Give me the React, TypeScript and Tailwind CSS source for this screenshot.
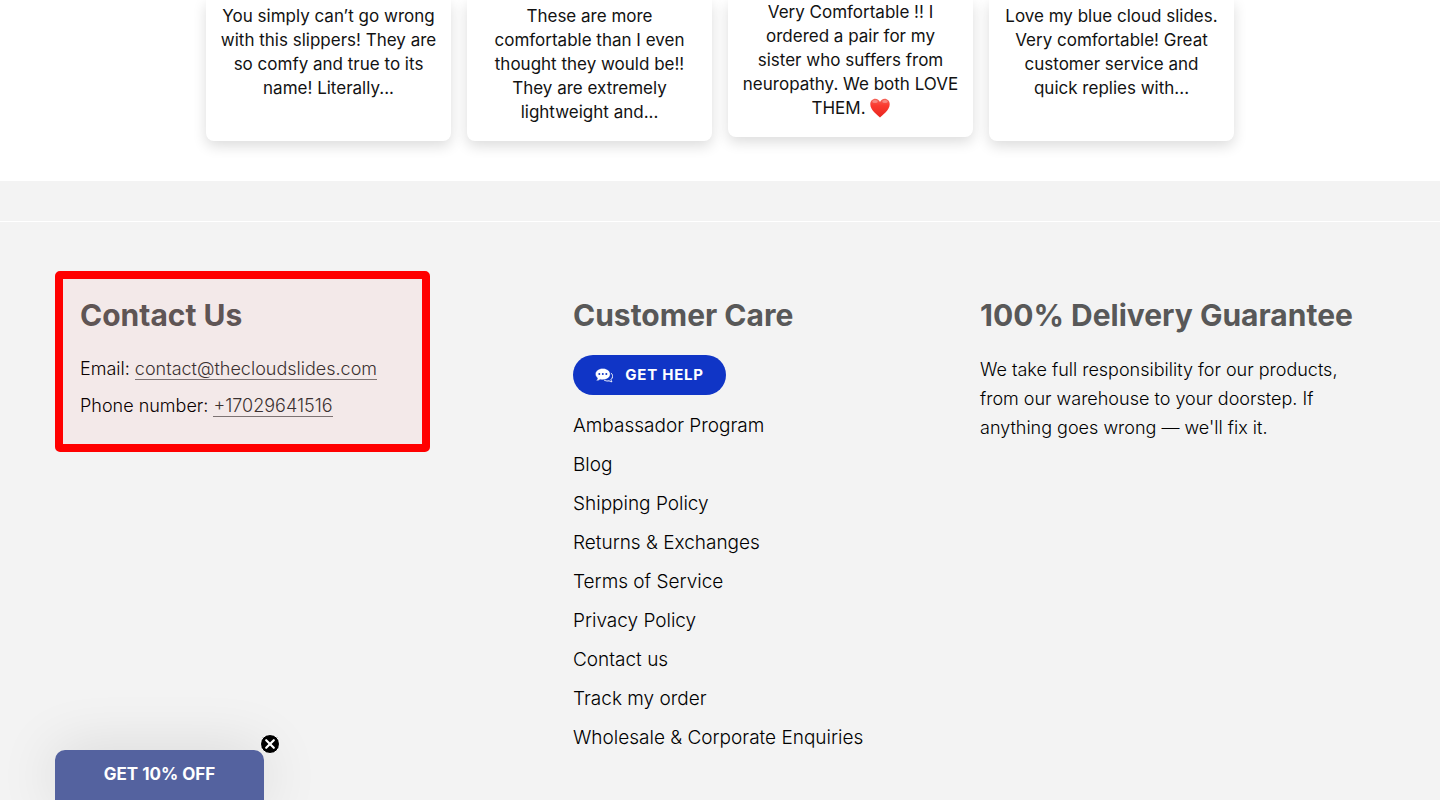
import { useState } from "react";

interface Review {
  lines: string[];
  loved?: boolean;
}

const reviews: Review[] = [
  {
    lines: [
      "You simply can’t go wrong",
      "with this slippers! They are",
      "so comfy and true to its",
      "name! Literally...",
    ],
  },
  {
    lines: [
      "These are more",
      "comfortable than I even",
      "thought they would be!!",
      "They are extremely",
      "lightweight and...",
    ],
  },
  {
    lines: [
      "Very Comfortable !! I",
      "ordered a pair for my",
      "sister who suffers from",
      "neuropathy. We both LOVE",
      "THEM.",
    ],
    loved: true,
  },
  {
    lines: [
      "Love my blue cloud slides.",
      "Very comfortable! Great",
      "customer service and",
      "quick replies with...",
    ],
  },
];

const careLinks = [
  "Ambassador Program",
  "Blog",
  "Shipping Policy",
  "Returns & Exchanges",
  "Terms of Service",
  "Privacy Policy",
  "Contact us",
  "Track my order",
  "Wholesale & Corporate Enquiries",
];

const Heart = () => (
  <svg viewBox="0 0 20 20" className="h-5 w-5" aria-hidden="true">
    <defs>
      <linearGradient id="heart" x1="0" y1="0" x2="0" y2="1">
        <stop offset="0" stopColor="#f4675c" />
        <stop offset="0.35" stopColor="#fb3b30" />
        <stop offset="1" stopColor="#e8261f" />
      </linearGradient>
    </defs>
    <path
      d="M10 19.6C7.6 16.6.3 12.4.3 6.2.3 3 2.5.7 5.3.7 7.5.7 9.2 2 10 4c.8-2 2.5-3.3 4.700-3.3 2.800 0 5 2.300 5 5.500 0 6.200-7.300 10.400-9.700 13.400z"
      fill="url(#heart)"
    />
    <ellipse cx="5" cy="3.4" rx="2.8" ry="1.5" fill="#fff" opacity="0.3" />
    <ellipse cx="15" cy="3.4" rx="2.8" ry="1.5" fill="#fff" opacity="0.3" />
  </svg>
);

const ChatIcon = () => (
  <svg viewBox="0 0 18 15" className="h-[15px] w-[18px]" aria-hidden="true">
    <path
      d="M16.2 5.2c1 .8 1.5 2 1.4 3.2-.1 1.4-.7 2.3-1.6 3.1.1.9.4 1.6.9 2.3-1.1 0-2-.4-2.8-1-1.6.4-3.3.2-4.7-.6"
      fill="none"
      stroke="#fff"
      strokeWidth="1"
      strokeLinecap="round"
      strokeLinejoin="round"
    />
    <path
      d="M7.800.4c4.200 0 7.400 2.500 7.400 5.700s-3.200 5.700-7.400 5.700c-.9 0-1.800-.1-2.600-.4-1 .8-2.400 1.300-4 1.300.8-.8 1.200-1.700 1.300-2.700C1.200 9 .4 7.600.4 6.100.4 2.900 3.600.4 7.800.4z"
      fill="#fff"
      stroke="#1035c6"
      strokeWidth="0.4"
    />
    <circle cx="4.3" cy="6" r="1" fill="#1035c6" />
    <circle cx="7.8" cy="6" r="1" fill="#1035c6" />
    <circle cx="11.3" cy="6" r="1" fill="#1035c6" />
  </svg>
);

const ReviewCard = ({ lines, loved }: Review) => (
  <article
    className={
      loved
        ? "self-start rounded-b-lg bg-white pb-[17px] text-center shadow-[0_5px_14px_rgba(0,0,0,0.14)]"
        : "rounded-b-lg bg-white pt-1 pb-[17px] text-center shadow-[0_5px_14px_rgba(0,0,0,0.14)]"
    }
  >
    <p className="text-[17px] leading-6 text-[#121212]">
      {lines.map((line, i) => (
        <span
          key={line}
          className="flex h-6 items-center justify-center gap-1 whitespace-nowrap"
        >
          {line}
          {loved && i === lines.length - 1 && <Heart />}
        </span>
      ))}
    </p>
  </article>
);

const FooterHeading = ({ children }: { children: string }) => (
  <h2 className="mb-[21px] text-3xl leading-[38px] font-bold whitespace-nowrap text-[#585858]">
    {children}
  </h2>
);

const Promo = () => {
  const [open, setOpen] = useState(true);

  if (!open) return null;

  return (
    <div className="fixed bottom-0 left-[55px] w-[209px] rounded-t-[10px] shadow-[0_0_60px_rgba(0,0,0,0.12)]">
      <button className="h-[50px] w-full cursor-pointer rounded-t-[10px] bg-[#54629f] text-[17px] font-bold text-white">
        GET 10% OFF
      </button>
      <button
        aria-label="Close"
        onClick={() => setOpen(false)}
        className="absolute -top-4 -right-4 cursor-pointer"
      >
        <svg viewBox="0 0 20 20" className="h-5 w-5">
          <circle cx="10" cy="10" r="9.5" fill="#000" stroke="#fff" />
          <path
            d="M6.2 6.2l7.6 7.6M13.8 6.2l-7.6 7.6"
            stroke="#fff"
            strokeWidth="2.2"
            strokeLinecap="round"
          />
        </svg>
      </button>
    </div>
  );
};

export default function App() {
  return (
    <div className="min-h-screen bg-[#f3f3f3] font-[Inter,sans-serif] text-black">
      <section className="overflow-hidden bg-white pb-10">
        <div className="mx-auto grid max-w-[1028px] grid-cols-4 gap-4">
          {reviews.map((review) => (
            <ReviewCard key={review.lines[0]} {...review} />
          ))}
        </div>
      </section>

      <div className="h-10" />

      <footer className="border-t border-white px-20 pt-[74px] pb-10">
        <div className="grid grid-cols-[466fr_380fr_380fr] gap-[27px]">
          <div>
            <div className="relative max-w-[325px]">
              <FooterHeading>Contact Us</FooterHeading>
              <div className="flex flex-col gap-[9px] text-lg leading-7 font-light whitespace-nowrap">
                <p>
                  Email:{" "}
                  <a
                    href="mailto:contact@thecloudslides.com"
                    className="border-b border-[#777] text-[#333]"
                  >
                    contact@thecloudslides.com
                  </a>
                </p>
                <p>
                  Phone number:{" "}
                  <a
                    href="tel:+17029641516"
                    className="border-b border-[#777] text-[#333]"
                  >
                    +17029641516
                  </a>
                </p>
              </div>
              <div className="pointer-events-none absolute -inset-x-[25px] -top-[25px] -bottom-8 rounded-[5px] border-8 border-[#ff0000]">
                <div className="h-full bg-[#ff0000]/4" />
              </div>
            </div>
          </div>

          <div>
            <FooterHeading>Customer Care</FooterHeading>
            <button className="flex h-10 w-[153px] cursor-pointer items-center justify-center gap-3 rounded-full bg-[#1035c6] text-[15px] font-bold tracking-wider whitespace-nowrap text-white">
              <ChatIcon />
              GET HELP
            </button>
            <ul className="mt-[11px] text-[19px] leading-[39px] font-light">
              {careLinks.map((link) => (
                <li key={link}>
                  <a href="#">{link}</a>
                </li>
              ))}
            </ul>
          </div>

          <div>
            <FooterHeading>100% Delivery Guarantee</FooterHeading>
            <p className="text-lg leading-[29px] font-light whitespace-nowrap">
              We take full responsibility for our products,
              <br />
              from our warehouse to your doorstep. If
              <br />
              anything goes wrong — we'll fix it.
            </p>
          </div>
        </div>
      </footer>

      <Promo />
    </div>
  );
}
